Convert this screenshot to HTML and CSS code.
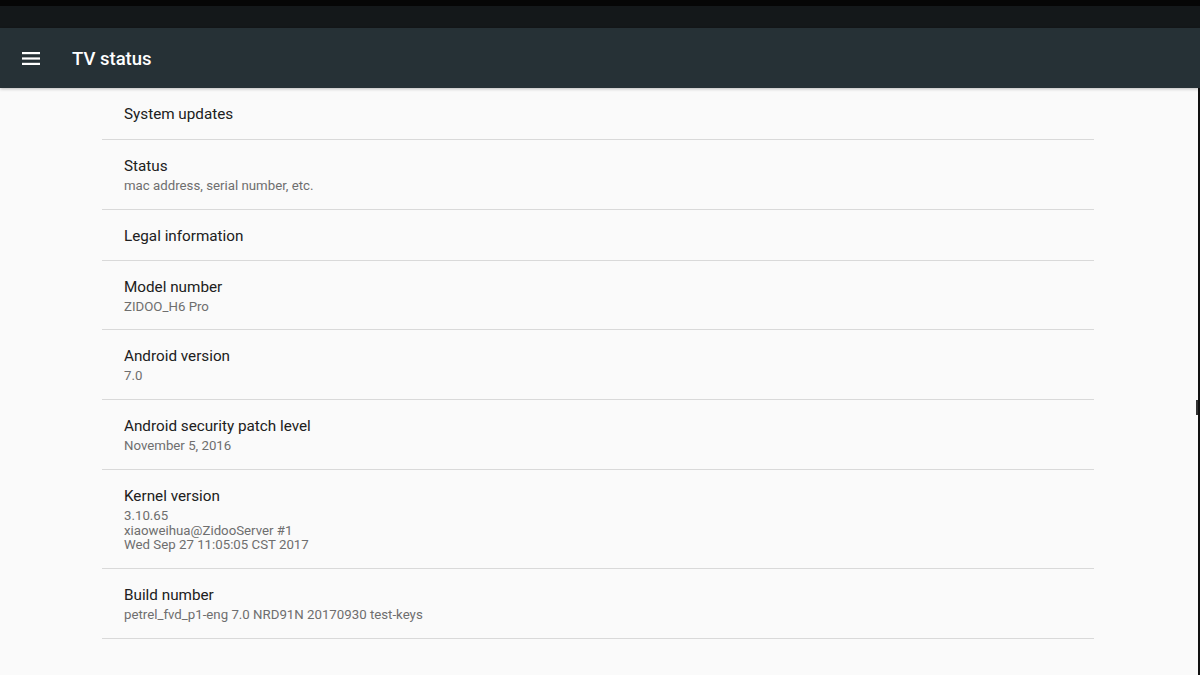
FILE: index.html
```html
<!DOCTYPE html>
<html lang="en">
<head>
    <meta charset="UTF-8">
    <title>TV status</title>
    <link rel="stylesheet" href="styles.css">
</head>
<body>
    <div class="status-bar"></div>
    <div class="toolbar">
        <svg class="menu-icon" width="18" height="13" viewBox="0 0 18 13">
            <rect x="0" y="0" width="18" height="2.2" fill="#fff"/>
            <rect x="0" y="5.4" width="18" height="2.2" fill="#fff"/>
            <rect x="0" y="10.8" width="18" height="2.2" fill="#fff"/>
        </svg>
        <span class="toolbar-title">TV status</span>
    </div>
    <div class="content">
        <div class="list">
            <div class="item first">
                <div class="title">System updates</div>
            </div>
            <div class="item">
                <div class="title">Status</div>
                <div class="summary">mac address, serial number, etc.</div>
            </div>
            <div class="item">
                <div class="title">Legal information</div>
            </div>
            <div class="item">
                <div class="title">Model number</div>
                <div class="summary">ZIDOO_H6 Pro</div>
            </div>
            <div class="item">
                <div class="title">Android version</div>
                <div class="summary">7.0</div>
            </div>
            <div class="item">
                <div class="title">Android security patch level</div>
                <div class="summary">November 5, 2016</div>
            </div>
            <div class="item">
                <div class="title">Kernel version</div>
                <div class="summary">3.10.65<br>xiaoweihua@ZidooServer #1<br>Wed Sep 27 11:05:05 CST 2017</div>
            </div>
            <div class="item">
                <div class="title">Build number</div>
                <div class="summary">petrel_fvd_p1-eng 7.0 NRD91N 20170930 test-keys</div>
            </div>
        </div>
        <div class="edge"><div class="thumb"></div></div>
    </div>
</body>
</html>
```
FILE: styles.css
```css
html, body {
    margin: 0;
    padding: 0;
    height: 100%;
}
body {
    font-family: Roboto, "Noto Sans", sans-serif;
    background-color: #fafafa;
    overflow: hidden;
    display: flex;
    flex-direction: column;
}
.status-bar {
    height: 28px;
    background: linear-gradient(#060606 0, #060606 6px, #14181a 6px);
    flex-shrink: 0;
}
.toolbar {
    height: 60px;
    background-color: #263136;
    display: flex;
    align-items: center;
    flex-shrink: 0;
    box-shadow: 0 1px 3px rgba(0, 0, 0, 0.25);
    position: relative;
    z-index: 1;
}
.menu-icon {
    margin-left: 22px;
    margin-top: 1px;
}
.toolbar-title {
    margin-left: 32px;
    margin-top: 2px;
    color: #fff;
    font-size: 18.5px;
    font-weight: 500;
}
.content {
    flex: 1;
    display: flex;
}
.list {
    flex: 1;
    padding: 0 104px 0 102px;
}
.item {
    padding: 15px 0 13px 22px;
    border-bottom: 1px solid #d9d9d9;
}
.item.first {
    padding-bottom: 14px;
}
.title {
    font-size: 15.25px;
    line-height: 22px;
    color: #202020;
}
.summary {
    margin-top: 2px;
    font-size: 13.25px;
    line-height: 14.7px;
    color: #6e6e6e;
    padding-bottom: 2px;
}
.edge {
    width: 2px;
    background-color: #111;
    position: relative;
}
.thumb {
    position: absolute;
    left: -2px;
    top: 312px;
    width: 2px;
    height: 15px;
    background-color: #333;
}
```
